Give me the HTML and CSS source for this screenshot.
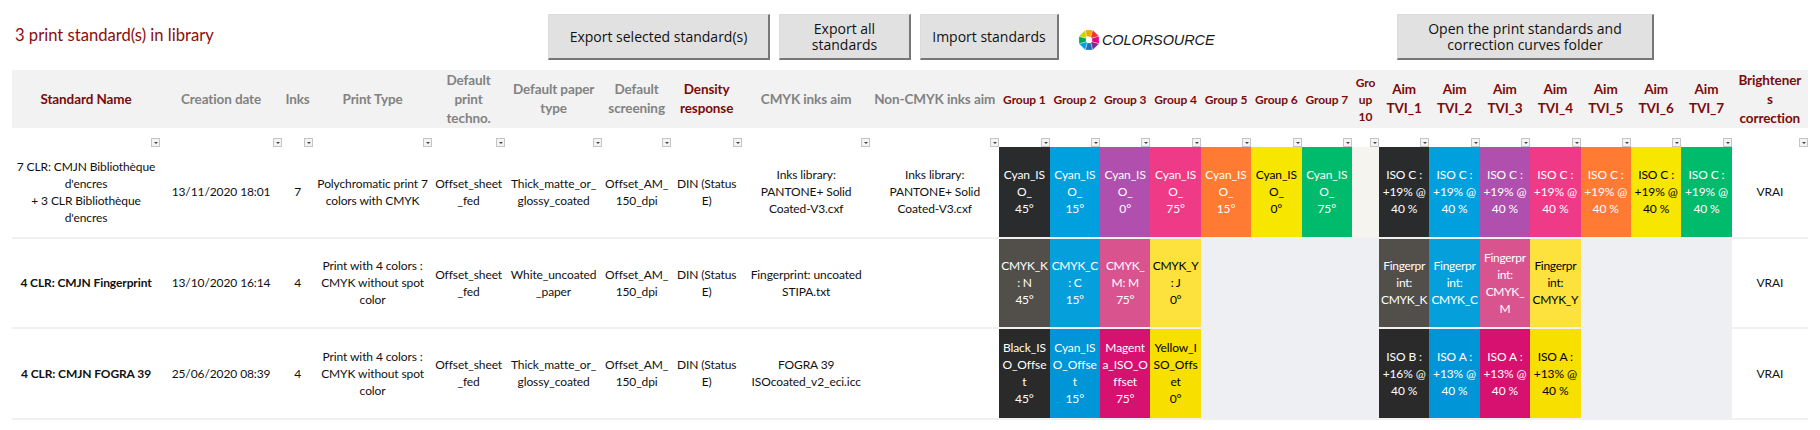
FILE: index.html
```html
<!DOCTYPE html>
<html lang="en">
<head>
	<meta charset="UTF-8">
	<title>Print standards library</title>
	<link rel="stylesheet" href="styles.css">
</head>
<body>
	<div class="topbar">
		<div class="title">3 print standard(s) in library</div>
		<button class="btn btn-selected">Export selected standard(s)</button>
		<button class="btn btn-all">Export all<br>standards</button>
		<button class="btn btn-import">Import standards</button>
		<div class="logo">
			<svg class="logo-icon" viewBox="0 0 24 24" width="22" height="22">
				<polygon points="8,1 16,1 14,9 9,8" fill="#f7a600"/>
				<polygon points="16,1 23,8 15,10 14,9" fill="#e8352e"/>
				<polygon points="23,8 23,16 15,14 15,10" fill="#e6007e"/>
				<polygon points="23,16 16,23 14,15 15,14" fill="#7b2d8e"/>
				<polygon points="16,23 8,23 10,15 14,15" fill="#1d71b8"/>
				<polygon points="8,23 1,16 9,14 10,15" fill="#00a0df"/>
				<polygon points="1,16 1,8 9,10 9,14" fill="#00a651"/>
				<polygon points="1,8 8,1 9,8 9,10" fill="#c4d600"/>
				<circle cx="12" cy="12" r="3.4" fill="#fff"/>
			</svg>
			<span class="logo-text">COLORSOURCE</span>
		</div>
		<button class="btn btn-folder">Open the print standards and<br>correction curves folder</button>
	</div>

	<table class="grid">
		<colgroup>
			<col class="w-name"><col class="w-date"><col class="w-inks"><col class="w-type"><col class="w-techno">
			<col class="w-paper"><col class="w-screen"><col class="w-density"><col class="w-cmyk"><col class="w-non">
			<col class="w-g"><col class="w-g"><col class="w-g"><col class="w-g"><col class="w-g"><col class="w-g"><col class="w-g">
			<col class="w-g10">
			<col class="w-t"><col class="w-t"><col class="w-t"><col class="w-t"><col class="w-t"><col class="w-t"><col class="w-t">
			<col class="w-bright">
		</colgroup>
		<tr class="head">
			<th class="red">Standard Name</th>
			<th>Creation date</th>
			<th>Inks</th>
			<th>Print Type</th>
			<th>Default<br>print<br>techno.</th>
			<th>Default paper<br>type</th>
			<th>Default<br>screening</th>
			<th class="red">Density<br>response</th>
			<th>CMYK inks aim</th>
			<th>Non-CMYK inks aim</th>
			<th class="red small">Group 1</th>
			<th class="red small">Group 2</th>
			<th class="red small">Group 3</th>
			<th class="red small">Group 4</th>
			<th class="red small">Group 5</th>
			<th class="red small">Group 6</th>
			<th class="red small">Group 7</th>
			<th class="red small">Gro<br>up<br>10</th>
			<th class="red">Aim<br>TVI_1</th>
			<th class="red">Aim<br>TVI_2</th>
			<th class="red">Aim<br>TVI_3</th>
			<th class="red">Aim<br>TVI_4</th>
			<th class="red">Aim<br>TVI_5</th>
			<th class="red">Aim<br>TVI_6</th>
			<th class="red">Aim<br>TVI_7</th>
			<th class="red">Brightener<br>s<br>correction</th>
		</tr>
		<tr class="filters">
			<td><span class="drop"></span></td><td><span class="drop"></span></td><td><span class="drop"></span></td><td><span class="drop"></span></td><td><span class="drop"></span></td>
			<td><span class="drop"></span></td><td><span class="drop"></span></td><td><span class="drop"></span></td><td><span class="drop"></span></td><td><span class="drop"></span></td>
			<td><span class="drop"></span></td><td><span class="drop"></span></td><td><span class="drop"></span></td><td><span class="drop"></span></td><td><span class="drop"></span></td><td><span class="drop"></span></td><td><span class="drop"></span></td>
			<td><span class="drop"></span></td>
			<td><span class="drop"></span></td><td><span class="drop"></span></td><td><span class="drop"></span></td><td><span class="drop"></span></td><td><span class="drop"></span></td><td><span class="drop"></span></td><td><span class="drop"></span></td>
			<td><span class="drop"></span></td>
		</tr>
		<tr class="row">
			<td>7 CLR: CMJN Bibliothèque<br>d'encres<br>+ 3 CLR Bibliothèque<br>d'encres</td>
			<td>13/11/2020 18:01</td>
			<td>7</td>
			<td>Polychromatic print 7<br>colors with CMYK</td>
			<td>Offset_sheet<br>_fed</td>
			<td>Thick_matte_or_<br>glossy_coated</td>
			<td>Offset_AM_<br>150_dpi</td>
			<td>DIN (Status<br>E)</td>
			<td>Inks library:<br>PANTONE+ Solid<br>Coated-V3.cxf</td>
			<td>Inks library:<br>PANTONE+ Solid<br>Coated-V3.cxf</td>
			<td class="k1">Cyan_IS<br>O_<br>45°</td>
			<td class="c1">Cyan_IS<br>O_<br>15°</td>
			<td class="v1">Cyan_IS<br>O_<br>0°</td>
			<td class="m1">Cyan_IS<br>O_<br>75°</td>
			<td class="o1">Cyan_IS<br>O_<br>15°</td>
			<td class="y1">Cyan_IS<br>O_<br>0°</td>
			<td class="g1">Cyan_IS<br>O_<br>75°</td>
			<td class="e1"></td>
			<td class="k1">ISO C :<br>+19% @<br>40 %</td>
			<td class="c1">ISO C :<br>+19% @<br>40 %</td>
			<td class="v1">ISO C :<br>+19% @<br>40 %</td>
			<td class="m1">ISO C :<br>+19% @<br>40 %</td>
			<td class="o1">ISO C :<br>+19% @<br>40 %</td>
			<td class="y1">ISO C :<br>+19% @<br>40 %</td>
			<td class="g1">ISO C :<br>+19% @<br>40 %</td>
			<td>VRAI</td>
		</tr>
		<tr class="row">
			<td class="bold">4 CLR: CMJN Fingerprint</td>
			<td>13/10/2020 16:14</td>
			<td>4</td>
			<td>Print with 4 colors :<br>CMYK without spot<br>color</td>
			<td>Offset_sheet<br>_fed</td>
			<td>White_uncoated<br>_paper</td>
			<td>Offset_AM_<br>150_dpi</td>
			<td>DIN (Status<br>E)</td>
			<td>Fingerprint: uncoated<br>STIPA.txt</td>
			<td></td>
			<td class="k2">CMYK_K<br>: N<br>45°</td>
			<td class="c2">CMYK_C<br>: C<br>15°</td>
			<td class="m2">CMYK_<br>M: M<br>75°</td>
			<td class="y2">CMYK_Y<br>: J<br>0°</td>
			<td class="e2"></td>
			<td class="e2"></td>
			<td class="e2"></td>
			<td class="e2"></td>
			<td class="k2">Fingerpr<br>int:<br>CMYK_K</td>
			<td class="c2">Fingerpr<br>int:<br>CMYK_C</td>
			<td class="m2">Fingerpr<br>int:<br>CMYK_<br>M</td>
			<td class="y2">Fingerpr<br>int:<br>CMYK_Y</td>
			<td class="e2"></td>
			<td class="e2"></td>
			<td class="e2"></td>
			<td>VRAI</td>
		</tr>
		<tr class="row">
			<td class="bold">4 CLR: CMJN FOGRA 39</td>
			<td>25/06/2020 08:39</td>
			<td>4</td>
			<td>Print with 4 colors :<br>CMYK without spot<br>color</td>
			<td>Offset_sheet<br>_fed</td>
			<td>Thick_matte_or_<br>glossy_coated</td>
			<td>Offset_AM_<br>150_dpi</td>
			<td>DIN (Status<br>E)</td>
			<td>FOGRA 39<br>ISOcoated_v2_eci.icc</td>
			<td></td>
			<td class="k3">Black_IS<br>O_Offse<br>t<br>45°</td>
			<td class="c3">Cyan_IS<br>O_Offse<br>t<br>15°</td>
			<td class="m3">Magent<br>a_ISO_O<br>ffset<br>75°</td>
			<td class="y3">Yellow_I<br>SO_Offs<br>et<br>0°</td>
			<td class="e2"></td>
			<td class="e2"></td>
			<td class="e2"></td>
			<td class="e2"></td>
			<td class="k3">ISO B :<br>+16% @<br>40 %</td>
			<td class="c3">ISO A :<br>+13% @<br>40 %</td>
			<td class="m3">ISO A :<br>+13% @<br>40 %</td>
			<td class="y3">ISO A :<br>+13% @<br>40 %</td>
			<td class="e2"></td>
			<td class="e2"></td>
			<td class="e2"></td>
			<td>VRAI</td>
		</tr>
	</table>
</body>
</html>
```
FILE: styles.css
```css
*{
	margin: 0;
	padding: 0;
	box-sizing: border-box;
}
body{
	background-color: #fff;
	font-family: "Lato", "Open Sans", sans-serif;
	font-size: 12px;
	letter-spacing: -0.1px;
	color: #111;
	padding: 0 12px;
}
.topbar{
	display: flex;
	align-items: flex-start;
	height: 70px;
	padding-top: 14px;
}
.title{
	flex: 0 0 536px;
	padding: 11px 0 0 3px;
	font-size: 16.6px;
	letter-spacing: 0;
	color: #8b0d0d;
	white-space: nowrap;
}
.btn{
	height: 46px;
	background-color: #e1e1e1;
	border: 1px solid #dcdcdc;
	border-right: 2px solid #777;
	border-bottom: 2px solid #777;
	font-family: "Open Sans", sans-serif;
	font-size: 14px;
	line-height: 16px;
	color: #111;
	text-align: center;
}
.btn-selected{
	width: 222px;
}
.btn-all{
	width: 132px;
	margin-left: 9px;
}
.btn-import{
	width: 139px;
	margin-left: 9px;
}
.btn-folder{
	width: 257px;
	margin-left: 181px;
}
.logo{
	display: flex;
	align-items: center;
	width: 138px;
	height: 46px;
	margin-left: 19px;
	padding-top: 6px;
}
.logo-icon polygon{
	stroke: #fff;
	stroke-width: 0.4;
}
.logo-text{
	margin-left: 2px;
	font-family: "Liberation Sans", sans-serif;
	font-style: italic;
	font-size: 14.5px;
	color: #1a1a1a;
}
.grid{
	width: 1796px;
	border-collapse: collapse;
	table-layout: fixed;
}
.grid th, .grid td{
	padding: 0;
	text-align: center;
	vertical-align: middle;
	white-space: nowrap;
	line-height: 17px;
}
.w-name{ width: 148px; }
.w-date{ width: 122px; }
.w-inks{ width: 31px; }
.w-type{ width: 119px; }
.w-techno{ width: 73px; }
.w-paper{ width: 97px; }
.w-screen{ width: 69px; }
.w-density{ width: 71px; }
.w-cmyk{ width: 128px; }
.w-non{ width: 129px; }
.w-g{ width: 50.4px; }
.w-g10{ width: 27px; }
.w-t{ width: 50.4px; }
.w-bright{ width: 76px; }
.head{
	height: 58px;
	background-color: #f2f2f2;
}
.head th{
	font-size: 13.5px;
	line-height: 19px;
	font-weight: bold;
	color: #828282;
}
.head th.red{
	color: #7c0a0a;
}
.head th.small{
	font-size: 12px;
	line-height: 17px;
}
.filters{
	height: 19px;
}
.filters td{
	text-align: right;
	vertical-align: bottom;
	line-height: 0;
}
.drop{
	display: inline-block;
	width: 9px;
	height: 9px;
	background-color: #f4f4f4;
	border: 1px solid #c4c4c4;
	position: relative;
}
.drop::after{
	content: "";
	position: absolute;
	left: 2px;
	top: 3px;
	border-left: 2px solid transparent;
	border-right: 2px solid transparent;
	border-top: 2px solid #444;
}
.row{
	height: 90.6px;
	border-bottom: 2px solid #f0f0f0;
}
.bold{
	font-weight: bold;
}
.k1, .c1, .v1, .m1, .o1, .g1, .k2, .c2, .m2, .k3, .c3, .m3{
	color: #fff;
}
.y1, .y2, .y3{
	color: #000;
}
.k2, .c2, .m2, .y2{
	letter-spacing: -0.3px;
}
.k1{ background-color: #2a2b2d; }
.c1{ background-color: #00a0df; }
.v1{ background-color: #b04fae; }
.m1{ background-color: #ee3a87; }
.o1{ background-color: #ff7a33; }
.y1{ background-color: #f7e600; }
.g1{ background-color: #00bb6c; }
.e1{ background-color: #f5f4ee; }
.k2{ background-color: #524e4a; }
.c2{ background-color: #059fdc; }
.m2{ background-color: #d9548f; }
.y2{ background-color: #fde23e; }
.e2{ background-color: #eeeff3; }
.k3{ background-color: #2a2a2a; }
.c3{ background-color: #0095d6; }
.m3{ background-color: #d6116f; }
.y3{ background-color: #f7df00; }
```
